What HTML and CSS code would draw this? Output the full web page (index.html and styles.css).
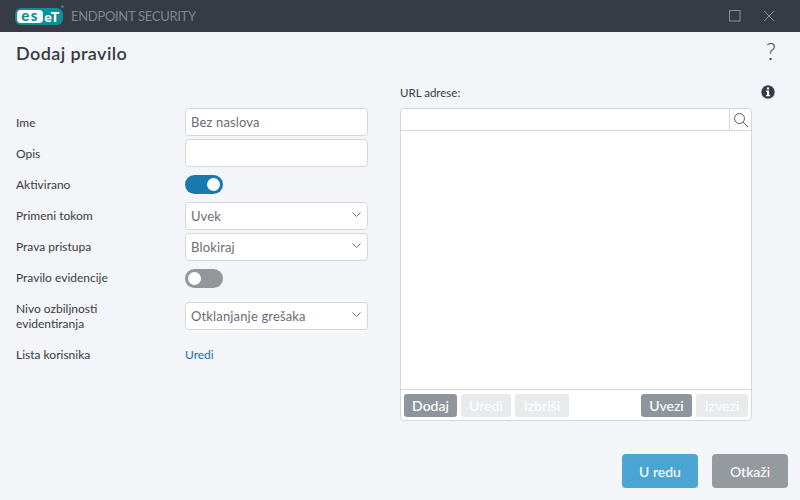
FILE: index.html
```html
<!DOCTYPE html>
<html lang="sr">
<head>
<meta charset="utf-8">
<title>Dodaj pravilo</title>
<link rel="stylesheet" href="styles.css">
</head>
<body>
<div class="window">
  <header class="titlebar">
    <div class="brand">
      <span class="logo">
        <span class="logo-es">es</span><span class="logo-et">eT</span>
        <span class="logo-dot"></span>
      </span>
      <span class="product">ENDPOINT SECURITY</span>
    </div>
    <div class="winbtns">
      <svg width="12" height="12" viewBox="0 0 12 12"><rect x=".5" y=".5" width="10.500" height="10.500" fill="none" stroke="#8b8f96"/></svg>
      <svg width="12" height="12" viewBox="0 0 12 12"><path d="M1 1l10 10M11 1L1 11" fill="none" stroke="#8b8f96"/></svg>
    </div>
  </header>
  <div class="heading">
    <h1>Dodaj pravilo</h1>
    <span class="help">?</span>
  </div>
  <main class="content">
    <section class="form">
      <label class="lbl">Ime</label>
      <div class="field">Bez naslova</div>
      <label class="lbl">Opis</label>
      <div class="field"></div>
      <label class="lbl">Aktivirano</label>
      <div class="toggle on"><span class="knob"></span></div>
      <label class="lbl up">Primeni tokom</label>
      <div class="field select">Uvek<svg class="chev" width="9" height="5" viewBox="0 0 9 5"><path d="M.5.5L4.500 4.500 8.500.5" fill="none" stroke="#6a6f76"/></svg></div>
      <label class="lbl up">Prava pristupa</label>
      <div class="field select">Blokiraj<svg class="chev" width="9" height="5" viewBox="0 0 9 5"><path d="M.5.5L4.500 4.500 8.500.5" fill="none" stroke="#6a6f76"/></svg></div>
      <label class="lbl up">Pravilo evidencije</label>
      <div class="toggle"><span class="knob"></span></div>
      <label class="lbl two">Nivo ozbiljnosti<br>evidentiranja</label>
      <div class="field select">Otklanjanje grešaka<svg class="chev" width="9" height="5" viewBox="0 0 9 5"><path d="M.5.5L4.500 4.500 8.500.5" fill="none" stroke="#6a6f76"/></svg></div>
      <label class="lbl">Lista korisnika</label>
      <a class="link">Uredi</a>
    </section>
    <section class="urls">
      <div class="urls-head">
        <span class="urls-title">URL adrese:</span>
        <svg class="info" width="14" height="14" viewBox="0 0 14 14"><circle cx="7" cy="7" r="6.700" fill="#363b45"/><rect x="5.900" y="2.400" width="2.200" height="2" fill="#fff"/><path d="M5 5.600h3.100v4.300h1v1.300H5V9.900h1V6.900H5z" fill="#fff"/></svg>
      </div>
      <div class="panel">
        <div class="search">
          <span class="search-input"></span>
          <span class="search-btn">
            <svg width="16" height="16" viewBox="0 0 16 16"><circle cx="6.500" cy="6.500" r="5" fill="none" stroke="#555b63"/><path d="M10.200 10.200L15 15" stroke="#555b63" fill="none"/></svg>
          </span>
        </div>
        <div class="list"></div>
        <div class="toolbar">
          <button class="tb w53">Dodaj</button>
          <button class="tb off w50">Uredi</button>
          <button class="tb off w54">Izbriši</button>
          <span class="spacer"></span>
          <button class="tb w51">Uvezi</button>
          <button class="tb off w52">Izvezi</button>
        </div>
      </div>
    </section>
  </main>
  <footer class="footer">
    <button class="action ok">U redu</button>
    <button class="action cancel">Otkaži</button>
  </footer>
</div>
</body>
</html>
```
FILE: styles.css
```css
* { box-sizing: border-box; }
html, body { margin: 0; padding: 0; }
body { width: 800px; height: 500px; overflow: hidden; font-family: Lato, "Liberation Sans", sans-serif; font-size: 12px; color: #363b45; background: #f3f5f8; }
.window { width: 800px; height: 500px; display: flex; flex-direction: column; }
.titlebar { height: 32px; background: #363b45; display: flex; align-items: center; justify-content: space-between; padding: 0 25px 0 15px; flex: none; }
.brand { display: flex; align-items: center; gap: 8px; }
.logo { position: relative; width: 48px; height: 17px; border-radius: 6px; background: #0f8f9a; display: flex; align-items: center; padding: 0 2px; font-weight: 900; font-size: 15px; line-height: 13px; color: #fff; }
.logo-es { background: #fff; color: #0f8f9a; border-radius: 4px; height: 13px; width: 26px; text-align: center; line-height: 11px; letter-spacing: 1.500px; }
.logo-et { width: 18px; text-align: center; font-size: 14px; line-height: 13px; letter-spacing: .5px; }
.logo-dot { position: absolute; top: -3px; right: -1px; width: 3px; height: 3px; border-radius: 50%; background: #0f8f9a; }
.product { color: #83868c; font-size: 13px; letter-spacing: -0.3px; }
.winbtns { display: flex; gap: 22px; align-items: center; }
.heading { height: 42px; flex: none; display: flex; justify-content: space-between; align-items: center; padding: 0 24px 0 16px; }
.heading h1 { margin: 0; font-size: 18px; font-weight: 600; letter-spacing: .4px; color: #363b45; }
.help { font-size: 23px; line-height: 24px; margin-top: -4px; color: #363b45; font-weight: 300; }
.content { display: flex; flex: none; padding-left: 16px; }
.form { width: 352px; margin-top: 34px; display: grid; grid-template-columns: 169px 183px; grid-template-rows: 28px 28px 29px 28px 28px 28px 42px 29px; row-gap: 3px; align-items: center; align-content: start; }
.lbl { color: #363b45; line-height: 15px; }
.lbl.up { margin-top: -2px; }
.field { height: 28px; border: 1px solid #d5d7da; border-radius: 4px; background: #fff; color: #6f6a74; font-size: 13px; padding: 0 5px; display: flex; align-items: center; justify-content: space-between; letter-spacing: .15px; }
.chev { margin-right: 1px; margin-top: -4px; }
.toggle { width: 38px; height: 19px; border-radius: 10px; background: #949699; position: relative; }
.toggle.on { background: #1779ad; }
.knob { position: absolute; top: 3px; left: 3px; width: 13px; height: 13px; background: #fff; border-radius: 50%; }
.on .knob { left: 22px; }
.link { color: #1a6fa8; }
.urls { width: 376px; margin-left: 32px; display: flex; flex-direction: column; }
.urls-head { height: 34px; display: flex; justify-content: space-between; align-items: center; padding: 2px 1px 0 0; }
.urls-title { font-size: 11.500px; }
.panel { width: 352px; height: 313px; background: #fff; border: 1px solid #d5d7da; border-radius: 4px; display: flex; flex-direction: column; }
.search { height: 22px; flex: none; display: flex; border-bottom: 1px solid #d5d7da; }
.search-input { flex: 1; }
.search-btn { width: 22px; border-left: 1px solid #d5d7da; display: flex; align-items: center; justify-content: center; }
.list { flex: 1; }
.toolbar { height: 31px; flex: none; border-top: 1px solid #d5d7da; display: flex; align-items: center; gap: 4px; padding: 0 3px; }
.spacer { flex: 1; }
.tb { height: 23px; border: 0; border-radius: 3px; background: #8f959c; color: #fff; font: 500 14px Lato, "Liberation Sans", sans-serif; padding: 0; }
.tb.off { background: #e8eaec; color: #fbfcfc; font-weight: 600; }
.w50 { width: 50px; }
.w51 { width: 51px; }
.w52 { width: 52px; }
.w53 { width: 53px; }
.w54 { width: 54px; }
.footer { flex: 1; display: flex; justify-content: flex-end; gap: 14px; padding: 33px 12px 0 0; }
.action { width: 76px; height: 34px; border: 0; border-radius: 4px; color: #fff; font: 500 14px Lato, "Liberation Sans", sans-serif; }
.ok { background: #4ba5d3; }
.cancel { background: #959a9f; }
```
